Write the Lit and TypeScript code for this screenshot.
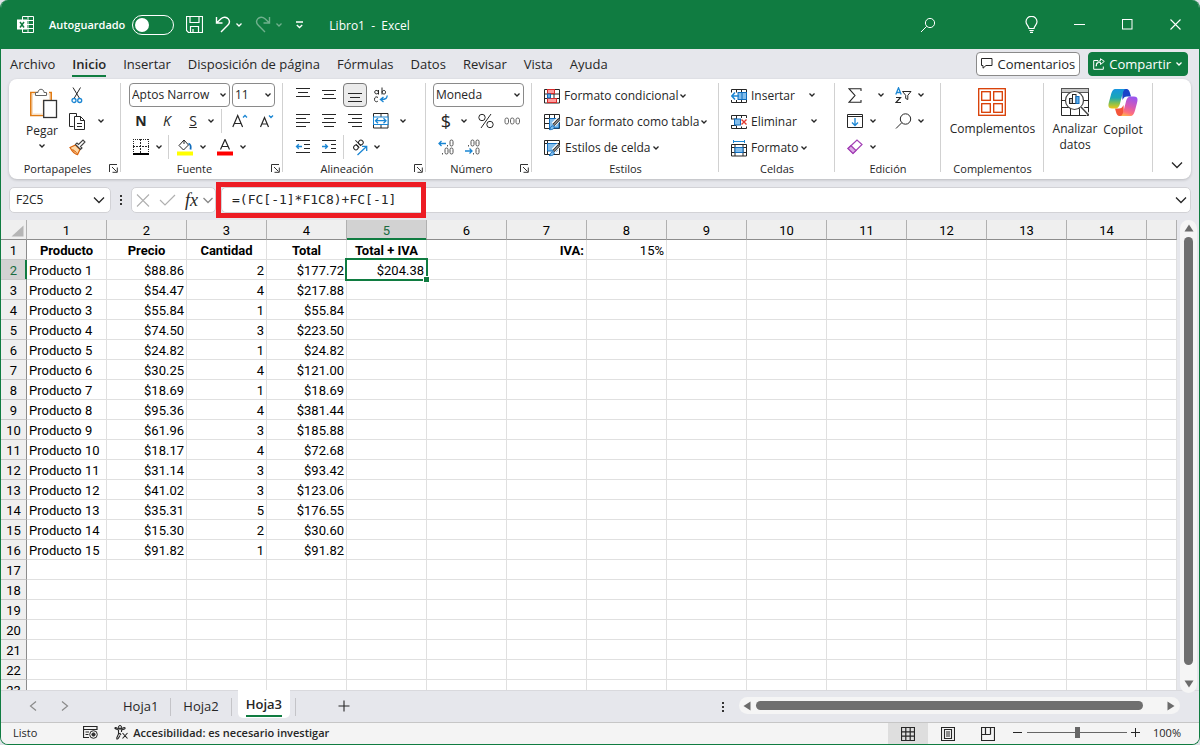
import { LitElement, html, svg, css } from "lit";
import { customElement, state } from "lit/decorators.js";

const icon = (w: number, h: number, body: unknown) =>
  html`<svg width=${w} height=${h} viewBox="0 0 ${w} ${h}" fill="none" stroke="currentColor" aria-hidden="true">${body}</svg>`;

const chevron = icon(8, 6, svg`<path d="M1.5 1.5 4 4 6.5 1.5" stroke-width="1.3"/>`);
const bigChevron = icon(12, 8, svg`<path d="M1 1.5 6 6.5 11 1.5" stroke-width="1.3"/>`);
const greyChevron = icon(10, 7, svg`<path d="M.5 1 5 5.500 9.500 1" stroke="#888" stroke-width="1.300"/>`);
const chevBtn = (label: string) => html`<button class="chev" aria-label=${label}>${chevron}</button>`;
const tool = (label: string, glyph: unknown) => html`<button class="tool" aria-label=${label}>${glyph}</button>`;

const BLUE = "#1b86d3";
const lines = (rows: [number, number, number][]) =>
  svg`${rows.map(([y, a, b]) => svg`<path d="M${a} ${y}.5H${b}"/>`)}`;

const alignIcon = (rows: [number, number, number][]) => icon(16, 16, lines(rows));

const brush = svg`<path d="M15 5 9.5 10.5" stroke="#fff" stroke-width="5"/><path d="M15.3 5 9.5 11" stroke-width="2.6"/><path d="M15 5.4 9.8 10.8" stroke="#ddd" stroke-width="1"/><path d="M5 15.5c1.500 0 1.200-3.600 3.600-3.600 1.800 0 2.200 1.600 1 2.700-1 1-3 1.200-4.600.9Z" fill="#83beec" stroke="#0f6cbd"/>`;

const icons = {
  excel: icon(17, 17, svg`<path d="M5.500 4V.5H16.500V16.500H5.500V13M11 .5V16.500M5.500 4.500H16.500M10 8.500H16.500M5.500 12.500H16.500"/><rect x="0" y="3.500" width="10" height="10" fill="#fff" stroke="none"/><path d="M3 6 7 11.500M7 6 3 11.500" stroke="#107c41" stroke-width="1.500"/>`),
  save: icon(17, 17, svg`<path d="M.5 .5H16.500V16.500H2.500L.5 14.500ZM4 .5V6.500H13V.5M4.500 16.500V10.500H12.500V16.500M7 16.500V13" stroke-width="1.200"/>`),
  undo: icon(16, 17, svg`<path d="M1.500 1V7H7.500M1.800 6.700 6 2.700C8.500 .5 11.500 .8 13.300 2.900 15 5 14.500 7.500 12.700 9.300L6 16" stroke-width="1.400"/>`),
  redo: icon(16, 17, svg`<path d="M14.500 1V7H8.500M14.200 6.700 10 2.700C7.500 .5 4.500 .8 2.700 2.900 1 5 1.500 7.500 3.300 9.300L10 16" stroke-width="1.400"/>`),
  customize: icon(9, 8, svg`<path d="M1 1H8M1.800 4 4.500 6.500 7.200 4" stroke-width="1.300"/>`),
  search: icon(16, 16, svg`<circle cx="10" cy="6" r="4.600"/><path d="M6.700 9.300 1 15"/>`),
  bulb: icon(13, 17, svg`<path d="M4 12.500C4 10 1 9 1 5.800A5.400 5.400 0 0 1 12 5.800C12 9 9 10 9 12.500ZM4.300 14.500H8.700M5 16.400H8" stroke-width="1.200"/>`),
  min: icon(11, 11, svg`<path d="M0 5.500H11"/>`),
  max: icon(11, 11, svg`<rect x=".5" y=".5" width="9.500" height="9.500"/>`),
  close: icon(11, 11, svg`<path d="M.5 .5 10.500 10.500M10.500 .5 .5 10.500" stroke-width="1.100"/>`),
  comment: icon(12, 11, svg`<path d="M.5 .5H11V7.500H5L2 10.200V7.500H.5Z"/>`),
  share: icon(12, 12, svg`<path d="M5 2.500H.7V11.300H10.300V8.500M3.200 8.200C3.500 5.500 5 4.200 7.500 4.200V6.500L11.300 3.400 7.500 .7V2.700C4.500 2.900 3.200 5 3.200 8.200Z"/>`),
  paste: icon(32, 31, svg`<g transform="translate(4 0)"><path d="M8 4.500H.8V27.500H13M19 4.500H21.200V12" stroke="#e07b14" stroke-width="1.600"/><path d="M2.500 6V26H13V12H19.500V6Z" fill="#fff" stroke="#f6dcc0"/><path d="M5.500 7.500V4.500H8C8 .2 14 .2 14 4.500H16.500V7.500Z" fill="#fff" stroke="#666"/><rect x="13.700" y="12.500" width="12.800" height="17" fill="#fff" stroke="#333" stroke-width="1.300"/></g>`),
  cut: icon(12, 17, svg`<path d="M2 .5 8.600 11.500M9.500 .5 3 11.500"/><circle cx="3" cy="13.500" r="2" stroke="${BLUE}" stroke-width="1.300"/><circle cx="8.700" cy="13.500" r="2" stroke="${BLUE}" stroke-width="1.300"/>`),
  copy: icon(17, 17, svg`<path d="M4.500 13.500H.5V.5H7.500V3"/><path d="M5.500 3.500H11.500L15.500 7.500V16.500H5.500ZM11.500 3.500V7.500H15.500M8 10.500H13M8 13.500H13"/>`),
  painter: icon(17, 17, svg`<path d="M1 8.500 6.500 6 11 10.500 8.500 15.500C6 15.500 3 12 1 8.500Z" fill="#ffd9a8" stroke="#d8630b" stroke-width="1.300"/><path d="M3.500 10 5.500 12.500M5.500 11.500 8 14.500" stroke="#d8630b"/><path d="M6.500 5.500 8 4 9.500 5.500 14 1 16 3 11.500 7.500 13 9 11.500 10.500Z" fill="#fff" stroke="#444" stroke-width="1.100"/>`),
  borders: icon(16, 16, svg`<path d="M.5 0V14M15.500 0V14M0 .5H16" stroke-dasharray="1 1"/><path d="M7.500 0V14M0 7.500H16" stroke-dasharray="2 1"/><path d="M0 15H16" stroke="#000" stroke-width="1.800"/>`),
  bucket: icon(16, 17, svg`<path d="M7 1 2 6.500 6.500 11 11.500 6 7 1V5"/><path d="M11.500 4.500C14.500 5.500 14 8 13.500 10.500" stroke="#0f6cbd" stroke-width="1.800"/><rect y="12.500" width="16" height="4" fill="#ff0" stroke="none"/>`),
  fontColor: icon(16, 17, svg`<path d="M3.500 10.500 8 .5 12.500 10.500M5 7.500H11" stroke-width="1.200"/><rect y="12.500" width="16" height="4" fill="#f00" stroke="none"/>`),
  grow: icon(16, 14, svg`<path d="M.8 13 5.700 1.500 10.600 13M2.500 9.500H9" stroke-width="1.200"/><path d="M11 3.500 13 1.500 15 3.500" stroke="${BLUE}" stroke-width="1.300"/>`),
  shrink: icon(16, 14, svg`<path d="M2.500 13 6.500 3.500 10.500 13M4 10H9" stroke-width="1.200"/><path d="M11 1.500 13 3.500 15 1.500" stroke="${BLUE}" stroke-width="1.300"/>`),
  wrap: icon(16, 17, svg`<path d="M5.500 3V7.500M5.500 5C5 2.800 1.500 3 1.800 5 1.500 7.500 5 7.500 5.500 5.300M9 .5V7.500M9 5C9.500 2.800 12.800 3 12.500 5.200 12.800 7.800 9.500 7.500 9 5.300M5 10.500C3.500 9.200 1.500 10 1.500 12.300S3.500 15.500 5 14"/><path d="M14 8.500C14.500 11 13 12.500 8 12.500M10.500 10 7.500 12.500 10.500 15" stroke="${BLUE}" stroke-width="1.400"/>`),
  merge: icon(16, 16, svg`<path d="M.5 .5H15V15H.5ZM8 .5V4M8 12V15"/><rect x=".5" y="4" width="14.500" height="7.500" fill="#fff" stroke="${BLUE}"/><path d="M2.500 7.700H13M5 5.300 2.500 7.700 5 10.200M10.500 5.300 13 7.700 10.500 10.200" stroke="${BLUE}" stroke-width="1.300"/>`),
  outdent: icon(16, 16, svg`<path d="M1 1.500H15M9 5.500H15M9 9.500H15M1 13.500H15"/><path d="M1.500 7.500H7M3.800 5.200 1.500 7.500 3.800 9.800" stroke="${BLUE}" stroke-width="1.300"/>`),
  indent: icon(16, 16, svg`<path d="M1 1.500H15M10 5.500H15M10 9.500H15M1 13.500H15"/><path d="M1 7.500H6.500M4.200 5.200 6.500 7.500 4.200 9.800" stroke="${BLUE}" stroke-width="1.300"/>`),
  orient: icon(17, 17, svg`<g transform="rotate(-45 6 6)"><circle cx="3.500" cy="7" r="2.300"/><path d="M5.800 4.500V9.500M8.200 1.500V9.500"/><circle cx="10.500" cy="7" r="2.300"/></g><path d="M6.500 16 15.500 7.500M11 7.300H15.700V12" stroke="${BLUE}" stroke-width="1.300"/>`),
  percent: icon(16, 16, svg`<circle cx="4" cy="4.500" r="3.200"/><circle cx="12" cy="11.500" r="3.200"/><path d="M13 1 3 15"/>`),
  zeros: icon(17, 8, svg`<g stroke="#666"><rect x="1" y="1" width="3.500" height="6" rx="1.700"/><rect x="6.500" y="1" width="3.500" height="6" rx="1.700"/><rect x="12" y="1" width="3.500" height="6" rx="1.700"/></g>`),
  moreDec: icon(17, 16, svg`<path d="M1 4.500H8M3.500 2 1 4.500 3.500 7" stroke="${BLUE}" stroke-width="1.300"/><g stroke="#555"><rect x="12" y="1" width="3" height="6" rx="1.500"/><path d="M9.500 6V7.500M4.500 14V15.500"/><rect x="7" y="9" width="3" height="6" rx="1.500"/><rect x="12" y="9" width="3" height="6" rx="1.500"/></g>`),
  lessDec: icon(17, 16, svg`<path d="M1 12H8M5.500 9.500 8 12 5.500 14.500" stroke="${BLUE}" stroke-width="1.300"/><g stroke="#555"><path d="M4.500 6V7.500M9.500 14V15.500"/><rect x="7" y="1" width="3" height="6" rx="1.500"/><rect x="12" y="1" width="3" height="6" rx="1.500"/><rect x="12" y="9" width="3" height="6" rx="1.500"/></g>`),
  condFormat: icon(16, 15, svg`<path d="M.5 .5H15.500V14H.5ZM0 5H16M0 9.500H16M4 0V14M10 0V14"/><rect x="3.500" y=".5" width="7" height="4" fill="#ff9d9d" stroke="#d92c2c"/><rect x="3.500" y="9.500" width="9" height="4" fill="#ff9d9d" stroke="#d92c2c"/><rect x="3.500" y="5" width="3" height="4" fill="#6bb2ea" stroke="#0f6cbd"/>`),
  tableFormat: icon(17, 17, svg`<path d="M.5 .5H15.500V14.500H.5ZM0 4.500H16M0 9.500H16M5.500 0V14M10.500 0V14"/><path d="M5.500 4.500H15V14H5.500Z" fill="#83beec" stroke="#0f6cbd"/>${brush}`),
  cellStyles: icon(17, 17, svg`<path d="M.5 .5H15.500V14.500H.5ZM0 3.500H16M3.500 0V15"/><path d="M3.500 3.500H13V11H3.500Z" fill="#83beec" stroke="#0f6cbd"/>${brush}`),
  insertCells: icon(16, 15, svg`<path d="M.5 3.500V.5H15.500V3.500M.5 11V13.500H15.500V11M5.500 .5V3.500M10.500 .5V3.500M5.500 11V13.500M10.500 11V13.500"/><rect x="7" y="3.500" width="8.500" height="7" fill="#83beec" stroke="#0f6cbd"/><path d="M11 3.500V10.500" stroke="#0f6cbd"/><path d="M1 7H8M4 3.500 .8 7 4 10.500" stroke="${BLUE}" stroke-width="1.500"/>`),
  deleteCells: icon(16, 15, svg`<path d="M.5 4V.5H15.500V3M.5 10.500V13.500H15.500V11.500M5.500 .5V4M10.500 .5V3M5.500 10.500V13.500M10.500 11.500V13.500M0 4H5M0 10.500H5"/><rect x="3.500" y="4" width="6" height="6" fill="#83beec" stroke="#0f6cbd"/><path d="M10.500 4.500 15.500 9.500M15.500 4.500 10.500 9.500" stroke="#e0392f" stroke-width="1.400"/>`),
  formatCells: icon(16, 17, svg`<path d="M2.500 1.500H13.500M2.500 0V3M13.500 0V3" stroke="${BLUE}"/><path d="M.5 4.500H15.500V16H.5ZM0 7.500H16M0 12.500H16M4 4V16M12 4V16"/><rect x="4" y="7.500" width="8" height="5" fill="#83beec" stroke="#0f6cbd"/>`),
  sum: icon(14, 15, svg`<path d="M13 3V.7H1L7 7.500 1 14.300H13V12" stroke-width="1.100"/>`),
  sortFilter: icon(17, 17, svg`<path d="M.8 7.500 3.500 .8 6.200 7.500M1.800 5.500H5.300" stroke="${BLUE}" stroke-width="1.300"/><path d="M1 10.500H5.500L1 15.500H6" stroke-width="1.200"/><path d="M7.500 4.500H16L12.800 8.300V12.500L10.700 11.500V8.300Z"/>`),
  fill: icon(16, 14, svg`<path d="M.5 .5H15.500V13.500H.5ZM0 2.500H16"/><path d="M8 4V11.500M5 8.500 8 11.500 11 8.500" stroke="${BLUE}" stroke-width="1.300"/>`),
  find: icon(17, 17, svg`<circle cx="10.500" cy="6" r="5.200"/><path d="M6.700 9.800 1 15.500"/>`),
  eraser: icon(17, 16, svg`<path d="M1 9.500 10 1 15 5.500 6 14.500Z" fill="#fff" stroke="#a33fb5" stroke-width="1.200"/><path d="M1 9.500 4 6.700 9 11.500 6 14.500Z" fill="#dba9e4" stroke="#a33fb5" stroke-width="1.200"/>`),
  addins: icon(28, 28, svg`<g stroke="#d83b01" stroke-width="1.300"><rect x=".7" y=".7" width="26.600" height="26.600"/><rect x="3.700" y="3.700" width="8.600" height="8.600"/><rect x="15.700" y="3.700" width="8.600" height="8.600"/><rect x="3.700" y="15.700" width="8.600" height="8.600"/><rect x="15.700" y="15.700" width="8.600" height="8.600"/></g>`),
  analyze: icon(28, 28, svg`<rect x=".5" y=".5" width="27" height="4" fill="#c8c8c8" stroke="#555"/><path d="M.5 4.500V27.500H27.500V4.500M.5 12.500H5M.5 19.500H27M9.500 20V27M18.500 20V27M22 12.500H27"/><circle cx="13.500" cy="12.500" r="9" fill="#fff" stroke="#444" stroke-width="1.200"/><path d="M20 19 27 26.500" stroke="#fff" stroke-width="4"/><path d="M20 19 27.500 27" stroke="#444" stroke-width="1.500"/><rect x="8.500" y="10.500" width="3" height="5" fill="#bbb"/><rect x="11.500" y="6.500" width="3.500" height="9" fill="#fff"/><rect x="15" y="8.500" width="3" height="7" fill="#60aeea" stroke="#0f6cbd"/>`),
  copilot: icon(30, 29, svg`<defs>
      <linearGradient id="cp1" x1="0" y1="0" x2="0" y2="1"><stop offset="0" stop-color="#1795e0"/><stop offset=".45" stop-color="#1aa7b5"/><stop offset=".75" stop-color="#8bc24a"/><stop offset="1" stop-color="#f0c419"/></linearGradient>
      <linearGradient id="cp2" x1=".6" y1="0" x2=".3" y2="1"><stop offset="0" stop-color="#9b55ee"/><stop offset=".5" stop-color="#d95bb0"/><stop offset=".8" stop-color="#ff6f7d"/><stop offset="1" stop-color="#ffb04f"/></linearGradient></defs>
    <g stroke="none"><path d="M14 1H18.500C20.500 1 21.500 3 22 5L23 8.500H19C17 8.500 15.500 9.500 14.500 12Z" fill="#1a44c8"/>
    <path d="M16 28H11.500C9.500 28 8.500 26 8 24L7 20.500H11C13 20.500 14.500 19.500 15.500 17Z" fill="#f4553a"/>
    <path d="M8 1H18C16 1 15.300 3 14.500 6L12 15.500C11 19 10 20.500 7 20.500H4C0 20.500 0 17.500 1 14L3 6.500C4 3 5 1 8 1Z" fill="url(#cp1)"/>
    <path d="M22 28H12C14 28 14.700 26 15.500 23L18 13.500C19 10 20 8.500 23 8.500H26C30 8.500 30 11.500 29 15L27 22.500C26 26 25 28 22 28Z" fill="url(#cp2)"/></g>`),
  launcher: icon(9, 9, svg`<path d="M.5 8V.5H8M3 3 7.500 7.500M8.300 3.500V8.300H3.500" stroke="#333"/>`),
  cross: icon(14, 13, svg`<path d="M1 .5 13 12.500M13 .5 1 12.500" stroke="#b0b0b0" stroke-width="1.100"/>`),
  check: icon(17, 12, svg`<path d="M1 6 6 11 16 1" stroke="#b0b0b0" stroke-width="1.200"/>`),
  dots: icon(4, 13, svg`<g fill="#333" stroke="none"><rect x="1" y="1" width="2" height="2"/><rect x="1" y="5" width="2" height="2"/><rect x="1" y="9" width="2" height="2"/></g>`),
  prev: icon(8, 12, svg`<path d="M7 1.500 1.500 6 7 10.500" stroke-width="1.200"/>`),
  next: icon(8, 12, svg`<path d="M1 1.500 6.500 6 1 10.500" stroke-width="1.200"/>`),
  plus: icon(12, 12, svg`<path d="M6 .5V11.500M.5 6H11.500" stroke-width="1.100"/>`),
  triUp: icon(10, 8, svg`<path d="M5 .5 9.500 7.500H.5Z" fill="#6b6b6b" stroke="none"/>`),
  triDown: icon(10, 8, svg`<path d="M.5 .5H9.500L5 7.500Z" fill="#6b6b6b" stroke="none"/>`),
  triLeft: icon(8, 10, svg`<path d="M7.500 .5V9.500L.5 5Z" fill="#6b6b6b" stroke="none"/>`),
  triRight: icon(8, 10, svg`<path d="M.5 .5 7.500 5 .5 9.500Z" fill="#6b6b6b" stroke="none"/>`),
  macro: icon(15, 13, svg`<path d="M6 11.500H.5V.5H14V4M.5 3.500H14M2.500 6H6M2.500 8.500H5.500" stroke-width="1.200"/><circle cx="10.500" cy="8.500" r="3.800" fill="#f4f4f4"/><circle cx="10.500" cy="8.500" r="1.600" fill="#333"/>`),
  access: icon(15, 15, svg`<circle cx="6" cy="2" r="1.500"/><path d="M.8 3.500 4.500 5V9L2.500 13.500M.8 3.500C.8 2.500 1.800 2.300 3 3L6 4.200 9.500 2.800C11 2.200 11.800 3.200 10.500 4L7.500 5V7M4.500 9 6 8.500 7 10M2.500 13.500C3 14.500 4 14 4.500 13L6 10.500M8.500 8 13.500 13.500M13.500 8 8.500 13.500" stroke-width="1.100"/>`),
  viewGrid: icon(14, 14, svg`<path d="M.5 .5H13.500V13.500H.5ZM.5 4.800H13.500M.5 9.200H13.500M4.800 .5V13.500M9.200 .5V13.500" stroke-width="1.200"/>`),
  viewPage: icon(14, 14, svg`<path d="M.5 .5H13.500V13.500H.5ZM3.500 2.500H10.500V11.500H3.500ZM5 5H9M5 7H9M5 9H9" stroke-width="1.100"/>`),
  viewBreak: icon(14, 14, svg`<path d="M.5 .5H13.500V13.500H.5ZM4.500 .5V7.500M9.500 .5V7.500M.5 7.500H9.500" stroke-width="1.200"/>`),
};

interface Product { price: string; qty: number; total: string; }
const products: Product[] = [
  ["$88.86", 2, "$177.72"], ["$54.47", 4, "$217.88"], ["$55.84", 1, "$55.84"],
  ["$74.50", 3, "$223.50"], ["$24.82", 1, "$24.82"], ["$30.25", 4, "$121.00"],
  ["$18.69", 1, "$18.69"], ["$95.36", 4, "$381.44"], ["$61.96", 3, "$185.88"],
  ["$18.17", 4, "$72.68"], ["$31.14", 3, "$93.42"], ["$41.02", 3, "$123.06"],
  ["$35.31", 5, "$176.55"], ["$15.30", 2, "$30.60"], ["$91.82", 1, "$91.82"],
].map(([price, qty, total]) => ({ price, qty, total }) as Product);

const COLS = Array.from({ length: 14 }, (_, i) => i + 1);
const ROWS = Array.from({ length: 23 }, (_, i) => i + 1);
const HEADINGS: Record<number, string> = { 1: "Producto", 2: "Precio", 3: "Cantidad", 4: "Total", 5: "Total + IVA" };

@customElement("ribbon-bar")
class RibbonBar extends LitElement {
  static styles = css`
    * { box-sizing: border-box; }
    :host { display: block; margin: 1px 8px 0; }
    button, select { font: inherit; color: inherit; background: none; border: 0; padding: 0; margin: 0; }
    svg { display: block; flex: none; }
    .ribbon { display: flex; height: 100px; background: #fff; border-radius: 8px; box-shadow: 0 1px 3px #0003; color: #262626; }
    .group { position: relative; display: flex; flex-direction: column; padding: 3px 0 0 7px; flex: none; }
    .group::after { content: ""; position: absolute; right: 0; top: 4px; bottom: 7px; width: 1px; background: #d1d1d1; }
    .clip { width: 112px; } .font { width: 162px; } .align { width: 143px; } .num { width: 106px; }
    .styles { width: 187px; } .cells { width: 116px; } .edit { width: 106px; } .addin { width: 103px; padding-left: 0; } .ai { width: 109px; }
    .row { display: flex; align-items: center; height: 26px; }
    .foot { display: grid; grid-template-columns: 12px 1fr 12px; align-items: center; margin: 0 3px 0 -4px; height: 17px; text-align: center; font-size: 11px; white-space: nowrap; }
    .foot.launch { grid-template-columns: 0 1fr 12px; margin-left: -7px; }
    .addin .foot { margin: 0; }
    .foot span { grid-column: 2; justify-self: center; }
    .foot button { justify-self: end; }
    .tool { width: 26px; height: 24px; display: grid; place-items: center; font-size: 14px; }
    .clip .tool { width: 18px; margin-right: 6px; }
    .pressed { border: 1px solid #7a7a7a; border-radius: 4px; background: #ebebeb; width: 24px; margin: 0 1px; }
    .bold { font-weight: 700; } .italic { font-style: italic; } .under { text-decoration: underline; }
    .currency { font-size: 18px; }
    .chev { width: 10px; height: 20px; display: grid; place-items: center; }
    .vsep { width: 1px; height: 24px; background: #d1d1d1; margin: 0 5px; }
    .tight { margin: 0 2px 0 1px; }
    .even { margin: 0 3px 0 4px; }
    .gap { width: 4px; }
    .box { display: flex; align-items: center; position: relative; height: 24px; border: 1px solid #8a8a8a; border-radius: 4px; margin-right: 2px; }
    .box select { appearance: none; width: 100%; height: 100%; padding-left: 2px; outline: 0; }
    .box svg { position: absolute; right: 2px; pointer-events: none; }
    .name { width: 101px; margin-left: 1px; } .size { width: 43px; } .fmt { width: 91px; }
    .cmd { display: flex; align-items: center; height: 24px; margin-left: 5px; padding-top: 2px; white-space: nowrap; }
    .cmd span { margin: 0 1px 0 4px; }
    .cmd + .chev { margin-left: 11px; }
    .big { display: flex; flex-direction: column; align-items: center; line-height: 16px; padding-top: 6px; }
    .big svg + span { margin-top: 5px; }
    .ai .big { width: 48px; }
    .pair { display: flex; height: 78px; }
    .pasting { width: 52px; display: flex; flex-direction: column; align-items: center; }
    .pasting .big { line-height: 14px; }
    .pasting .chev { height: 16px; }
    .center { justify-content: center; }
    .end { flex: 1; display: flex; justify-content: flex-end; align-items: flex-end; padding: 0 8px 10px 0; }
  `;

  foot(label: string, launch = false) {
    return html`<div class="foot ${launch ? "launch" : ""}"><span>${label}</span>${launch ? html`<button aria-label="Configuración de ${label}">${icons.launcher}</button>` : ""}</div>`;
  }

  picker(cls: string, label: string, value: string) {
    return html`<div class="box ${cls}"><select aria-label=${label}><option>${value}</option></select>${chevron}</div>`;
  }

  cmd(glyph: unknown, label: string, inline = true) {
    return html`<button class="cmd">${glyph}<span>${label}</span>${inline ? chevron : ""}</button>${inline ? "" : chevBtn(`Más de ${label}`)}`;
  }

  render() {
    return html`<div class="ribbon">
      <div class="group clip">
        <div class="pair">
          <div class="pasting"><button class="big">${icons.paste}<span>Pegar</span></button>${chevBtn("Opciones de pegado")}</div>
          <div>
            <div class="row">${tool("Cortar", icons.cut)}</div>
            <div class="row">${tool("Copiar", icons.copy)}<span class="gap"></span>${chevBtn("Opciones de copia")}</div>
            <div class="row">${tool("Copiar formato", icons.painter)}</div>
          </div>
        </div>
        ${this.foot("Portapapeles", true)}
      </div>
      <div class="group font">
        <div class="row">${this.picker("name", "Fuente", "Aptos Narrow")}${this.picker("size", "Tamaño", "11")}</div>
        <div class="row">
          <button class="tool bold">N</button><button class="tool italic">K</button><button class="tool under">S</button>
          ${chevBtn("Subrayado")}<span class="vsep"></span>${tool("Aumentar", icons.grow)}${tool("Reducir", icons.shrink)}
        </div>
        <div class="row">
          ${tool("Bordes", icons.borders)}${chevBtn("Más bordes")}<span class="vsep even"></span>
          ${tool("Relleno", icons.bucket)}${chevBtn("Color de relleno")}<span class="gap"></span>${tool("Color", icons.fontColor)}${chevBtn("Color de fuente")}
        </div>
        ${this.foot("Fuente", true)}
      </div>
      <div class="group align">
        <div class="row">
          ${tool("Arriba", alignIcon([[1, 1, 15], [5, 3, 13], [9, 1, 15]]))}
          ${tool("Medio", alignIcon([[3, 1, 15], [7, 3, 13], [11, 1, 15]]))}
          <button class="tool pressed" aria-label="Abajo" aria-pressed="true">${alignIcon([[6, 1, 15], [10, 3, 13], [14, 1, 15]])}</button>
          ${tool("Ajustar texto", icons.wrap)}
        </div>
        <div class="row">
          ${tool("Izquierda", alignIcon([[1, 1, 15], [5, 1, 11], [9, 1, 15], [13, 1, 11]]))}
          ${tool("Centrar", alignIcon([[1, 1, 15], [5, 3, 13], [9, 1, 15], [13, 3, 13]]))}
          ${tool("Derecha", alignIcon([[1, 1, 15], [5, 5, 15], [9, 1, 15], [13, 5, 15]]))}
          ${tool("Combinar", icons.merge)}<span class="gap"></span>${chevBtn("Más de combinar")}
        </div>
        <div class="row">
          ${tool("Disminuir sangría", icons.outdent)}${tool("Aumentar sangría", icons.indent)}<span class="vsep tight"></span>
          ${tool("Orientación", icons.orient)}${chevBtn("Más orientación")}
        </div>
        ${this.foot("Alineación", true)}
      </div>
      <div class="group num">
        <div class="row">${this.picker("fmt", "Formato de número", "Moneda")}</div>
        <div class="row">
          <button class="tool currency">$</button>${chevBtn("Más moneda")}<span class="gap"></span>
          ${tool("Porcentaje", icons.percent)}${tool("Millares", icons.zeros)}
        </div>
        <div class="row">${tool("Aumentar decimales", icons.moreDec)}${tool("Disminuir decimales", icons.lessDec)}</div>
        ${this.foot("Número", true)}
      </div>
      <div class="group styles">
        <div class="row">${this.cmd(icons.condFormat, "Formato condicional")}</div>
        <div class="row">${this.cmd(icons.tableFormat, "Dar formato como tabla")}</div>
        <div class="row">${this.cmd(icons.cellStyles, "Estilos de celda")}</div>
        ${this.foot("Estilos")}
      </div>
      <div class="group cells">
        <div class="row">${this.cmd(icons.insertCells, "Insertar", false)}</div>
        <div class="row">${this.cmd(icons.deleteCells, "Eliminar", false)}</div>
        <div class="row">${this.cmd(icons.formatCells, "Formato")}</div>
        ${this.foot("Celdas")}
      </div>
      <div class="group edit">
        <div class="row">${tool("Autosuma", icons.sum)}<span class="gap"></span><span class="gap"></span>${chevBtn("Más sumas")}<span class="gap"></span>${tool("Ordenar y filtrar", icons.sortFilter)}${chevBtn("Más orden")}</div>
        <div class="row">${tool("Rellenar", icons.fill)}${chevBtn("Más relleno")}<span class="gap"></span><span class="gap"></span><span class="gap"></span>${tool("Buscar", icons.find)}${chevBtn("Más búsqueda")}</div>
        <div class="row">${tool("Borrar", icons.eraser)}${chevBtn("Más borrar")}</div>
        ${this.foot("Edición")}
      </div>
      <div class="group addin">
        <div class="pair center"><button class="big">${icons.addins}<span>Complementos</span></button></div>
        ${this.foot("Complementos")}
      </div>
      <div class="group ai">
        <div class="pair">
          <button class="big">${icons.analyze}<span>Analizar<br>datos</span></button>
          <button class="big">${icons.copilot}<span>Copilot</span></button>
        </div>
      </div>
      <div class="end"><button aria-label="Contraer la cinta">${bigChevron}</button></div>
    </div>`;
  }
}

@customElement("sheet-grid")
class SheetGrid extends LitElement {
  static styles = css`
    :host { display: block; flex: 1; min-width: 0; overflow: hidden; background: #fff; }
    table { table-layout: fixed; width: 100%; min-width: 1160px; border-collapse: separate; border-spacing: 0; font: 13px/17px Roboto, "Liberation Sans", sans-serif; color: #000; }
    th, td { box-sizing: border-box; height: 20px; padding: 2px 2px 0; overflow: hidden; white-space: nowrap; border: solid #e0e0e0; border-width: 0 1px 1px 0; text-align: right; }
    th { font-weight: 400; text-align: center; }
    thead th { background: #efefef; border-color: #b8b8b8 #b0b0b0 #8c8c8c; }
    tbody th { background: #efefef; border-color: #c8c8c8 #8c8c8c #c8c8c8; }
    .rowhead { width: 26px; }
    .col { width: 80px; }
    .corner svg { display: block; margin-left: 8px; }
    thead .on { background: #d2d2d2; color: #1a6b41; border-bottom-color: #107c41; box-shadow: inset 0 -1px #107c41; }
    tbody th.on { background: #d2d2d2; color: #1a6b41; border-right-color: #107c41; box-shadow: inset -1px 0 #107c41; }
    .left { text-align: left; }
    .head { text-align: center; font-weight: 700; }
    .strong { font-weight: 700; }
    .active { position: relative; overflow: visible; }
    .active::before { content: ""; position: absolute; inset: -2px; border: 2px solid #107c41; }
    .active::after { content: ""; position: absolute; right: -3px; bottom: -3px; width: 5px; height: 5px; background: #107c41; outline: 1px solid #fff; }
  `;

  cell(r: number, c: number) {
    if (r === 1) {
      if (HEADINGS[c]) return html`<td class="head">${HEADINGS[c]}</td>`;
      if (c === 7) return html`<td class="strong">IVA:</td>`;
      if (c === 8) return html`<td>15%</td>`;
    }
    const p = products[r - 2];
    if (p) {
      if (c === 1) return html`<td class="left">Producto ${r - 1}</td>`;
      if (c === 2) return html`<td>${p.price}</td>`;
      if (c === 3) return html`<td>${p.qty}</td>`;
      if (c === 4) return html`<td>${p.total}</td>`;
      if (c === 5 && r === 2) return html`<td class="active">$204.38</td>`;
    }
    return html`<td></td>`;
  }

  render() {
    return html`<table>
      <thead><tr>
        <th class="rowhead corner">${icon(13, 12, svg`<path d="M12.500 .5V11.500H.5Z" fill="#b5b5b5" stroke="none"/>`)}</th>
        ${COLS.map((c) => html`<th class="col ${c === 5 ? "on" : ""}" scope="col">${c}</th>`)}
        <th></th>
      </tr></thead>
      <tbody>${ROWS.map((r) => html`<tr><th scope="row" class=${r === 2 ? "on" : ""}>${r}</th>${COLS.map((c) => this.cell(r, c))}<td></td></tr>`)}</tbody>
    </table>`;
  }
}

@customElement("app-root")
class AppRoot extends LitElement {
  static styles = css`
    * { box-sizing: border-box; }
    :host { display: block; height: 100vh; background: #dfe3e8; font: 12px/16px "Open Sans", "Noto Sans", sans-serif; color: #262626; }
    button, input { font: inherit; color: inherit; background: none; border: 0; padding: 0; margin: 0; outline: 0; }
    svg { display: block; flex: none; }
    .window { height: 100%; display: flex; flex-direction: column; border: solid #107c41; border-width: 0 1px 1px; border-radius: 8px; overflow: hidden; background: #e6e7ec; }
    .title { display: flex; align-items: center; height: 49px; flex: none; background: #107c41; color: #fff; padding: 0 0 0 16px; }
    .auto { display: flex; align-items: center; gap: 7px; margin-left: 15px; font-size: 11px; font-weight: 600; }
    .switch { appearance: none; width: 42px; height: 20px; border: 1px solid #fff; border-radius: 10px; display: flex; align-items: center; padding-left: 2px; }
    .switch::before { content: ""; width: 14px; height: 14px; border-radius: 7px; background: #fff; }
    .switch:checked { justify-content: flex-end; padding-right: 2px; }
    .quick { display: flex; align-items: center; margin-left: 12px; }
    .quick button + button { margin-left: 12px; }
    .quick button + .small { margin-left: 4px; }
    .dim { opacity: .4; }
    .doc { margin-left: 25px; padding-top: 2px; white-space: pre; }
    .tools { display: flex; align-items: center; margin-left: auto; }
    .tools button { width: 48px; height: 32px; display: grid; place-items: center; }
    .tools .find { margin-right: 55px; }
    .tabs { display: flex; align-items: center; height: 29px; flex: none; padding: 0 11px 0 9px; font-size: 13px; gap: 17px; white-space: nowrap; }
    .tabs a { color: inherit; text-decoration: none; height: 26px; line-height: 26px; }
    .tabs .current { font-weight: 600; border-bottom: 2px solid #107c41; }
    .actions { display: flex; gap: 8px; margin-left: auto; }
    .actions button { display: flex; align-items: center; gap: 4px; height: 24px; padding: 0 4px; border: 1px solid #8a8a8a; border-radius: 4px; background: #fff; }
    .actions .share { background: #107c41; border-color: #107c41; color: #fff; }
    .formula { display: flex; height: 26px; margin: 8px 8px 7px 8px; flex: none; }
    .fbox { display: flex; align-items: center; background: #fff; border: 1px solid #d2d2d6; border-radius: 5px; }
    .namebox { width: 102px; padding: 0 5px 0 6px; }
    .namebox input { flex: 1; min-width: 0; }
    .more { width: 20px; display: grid; place-items: center; }
    .fx { width: 85px; padding: 0 1px 0 4px; gap: 9px; margin-right: 5px; }
    .fxglyph { font: italic 18px/20px "Liberation Serif", serif; }
    .fxglyph + button { margin-left: -4px; }
    .entry { position: relative; flex: 1; padding: 0 3px 0 10px; }
    .entry input { flex: 1; height: 20px; font: 13px/20px "DejaVu Sans Mono", monospace; }
    .frame { position: absolute; left: -6px; top: -6px; width: 210px; height: 36px; border: 5px solid #ed1c24; pointer-events: none; }
    .sheet { flex: 1; min-height: 0; display: flex; gap: 3px; padding-right: 2px; }
    .vbar { width: 17px; margin-bottom: -3px; background: #f5f5f5; border-radius: 9px; display: flex; flex-direction: column; align-items: center; padding: 4px 0 5px; z-index: 1; }
    .vthumb { width: 9px; flex: 1; margin: 5px 0 15px; border-radius: 5px; background: #6f6f6f; }
    .bottom { display: flex; align-items: flex-start; height: 32px; flex: none; border-top: 1px solid #d9d9dd; padding-right: 19px; font-size: 13px; line-height: 30px; }
    .nav { display: flex; gap: 24px; color: #8a8a8a; height: 30px; padding: 0 42px 0 28px; }
    .sheets { display: flex; margin-top: -1px; }
    .sheets button { height: 28px; padding: 0 13px 0 12px; line-height: 32px; position: relative; }
    .sheets button:not(.current)::after { content: ""; position: absolute; right: 0; top: 8px; height: 18px; width: 1px; background: #c4c4c8; }
    .sheets .current { background: #fff; border-radius: 0 0 5px 5px; font-weight: 600; margin-left: 6px; padding: 0 8px; line-height: 25px; }
    .sheets .current span { display: block; height: 25px; border-bottom: 2px solid #107c41; }
    .rule { width: 1px; height: 18px; margin: 7px 42px 0 5px; background: #c4c4c8; }
    .add { height: 30px; }
    .grip { margin: 10px 14px 0 auto; }
    .hbar { width: 441px; height: 17px; margin-top: 6px; background: #f5f5f5; border-radius: 9px; display: flex; align-items: center; padding: 0 5px 0 4px; }
    .hthumb { height: 9px; flex: 1; margin: 0 24px 0 5px; border-radius: 5px; background: #6f6f6f; }
    .status { display: flex; align-items: center; height: 22px; flex: none; background: #f4f4f4; border-top: 1px solid #c6c6c6; font-size: 11px; padding: 0 18px 2px 12px; }
    .status .rec { margin: 0 16px 0 46px; }
    .status .acc { display: flex; align-items: center; gap: 4px; font-weight: 600; }
    .views { display: flex; margin-left: auto; }
    .views button { width: 40px; height: 21px; margin-bottom: -2px; display: grid; place-items: center; }
    .views .on { background: #dedede; }
    .zoom { display: flex; align-items: center; margin-left: 5px; }
    .zoom input { appearance: none; width: 100px; height: 11px; margin: 0 4px 0 5px; background: linear-gradient(#666, #666) center / 100% 1px no-repeat; }
    .zoom input::-webkit-slider-thumb { appearance: none; width: 5px; height: 11px; background: #666; }
    .zoom output { margin-left: 13px; }
  `;

  @state() autosave = false;
  @state() zoom = 100;

  render() {
    const tabs = ["Archivo", "Inicio", "Insertar", "Disposición de página", "Fórmulas", "Datos", "Revisar", "Vista", "Ayuda"];
    return html`<div class="window">
      <header class="title">
        ${icons.excel}
        <label class="auto">Autoguardado<input class="switch" type="checkbox" .checked=${this.autosave}></label>
        <div class="quick">
          <button aria-label="Guardar">${icons.save}</button>
          <button aria-label="Deshacer">${icons.undo}</button>
          <button class="small" aria-label="Más deshacer">${chevron}</button>
          <button class="dim" aria-label="Rehacer">${icons.redo}</button>
          <button class="small dim" aria-label="Más rehacer">${chevron}</button>
          <button aria-label="Personalizar">${icons.customize}</button>
        </div>
        <span class="doc">Libro1  -  Excel</span>
        <div class="tools">
          <button class="find" aria-label="Buscar">${icons.search}</button>
          <button aria-label="Sugerencias">${icons.bulb}</button>
          <button aria-label="Minimizar">${icons.min}</button>
          <button aria-label="Maximizar">${icons.max}</button>
          <button aria-label="Cerrar">${icons.close}</button>
        </div>
      </header>
      <nav class="tabs">
        ${tabs.map((t) => html`<a href="#" class=${t === "Inicio" ? "current" : ""}>${t}</a>`)}
        <div class="actions">
          <button>${icons.comment}Comentarios</button>
          <button class="share">${icons.share}Compartir${chevron}</button>
        </div>
      </nav>
      <ribbon-bar></ribbon-bar>
      <div class="formula">
        <div class="fbox namebox"><input aria-label="Cuadro de nombres" .value=${"F2C5"}>${bigChevron}</div>
        <span class="more">${icons.dots}</span>
        <div class="fbox fx">
          <button aria-label="Cancelar">${icons.cross}</button><button aria-label="Introducir">${icons.check}</button>
          <button class="fxglyph" aria-label="Insertar función">fx</button><button aria-label="Más funciones">${greyChevron}</button>
        </div>
        <div class="fbox entry">
          <input aria-label="Barra de fórmulas" .value=${"=(FC[-1]*F1C8)+FC[-1]"}>
          <button aria-label="Expandir">${bigChevron}</button>
          <span class="frame"></span>
        </div>
      </div>
      <main class="sheet">
        <sheet-grid></sheet-grid>
        <div class="vbar" aria-hidden="true">${icons.triUp}<div class="vthumb"></div>${icons.triDown}</div>
      </main>
      <div class="bottom">
        <div class="nav"><button aria-label="Anterior">${icons.prev}</button><button aria-label="Siguiente">${icons.next}</button></div>
        <div class="sheets"><button>Hoja1</button><button>Hoja2</button><button class="current"><span>Hoja3</span></button></div>
        <span class="rule"></span>
        <button class="add" aria-label="Nueva hoja">${icons.plus}</button>
        <span class="grip">${icons.dots}</span>
        <div class="hbar" aria-hidden="true">${icons.triLeft}<div class="hthumb"></div>${icons.triRight}</div>
      </div>
      <footer class="status">
        <span>Listo</span><button class="rec" aria-label="Grabar macro">${icons.macro}</button>
        <button class="acc">${icons.access}Accesibilidad: es necesario investigar</button>
        <div class="views">
          <button class="on" aria-label="Normal">${icons.viewGrid}</button>
          <button aria-label="Diseño de página">${icons.viewPage}</button>
          <button aria-label="Saltos de página">${icons.viewBreak}</button>
        </div>
        <div class="zoom">
          <button aria-label="Alejar">${icon(9, 9, svg`<path d="M0 4.500H9"/>`)}</button>
          <input type="range" min="0" max="200" .value=${String(this.zoom)} aria-label="Zoom">
          <button aria-label="Acercar">${icon(9, 9, svg`<path d="M0 4.500H9M4.500 0V9"/>`)}</button>
          <output>${this.zoom}%</output>
        </div>
      </footer>
    </div>`;
  }
}
